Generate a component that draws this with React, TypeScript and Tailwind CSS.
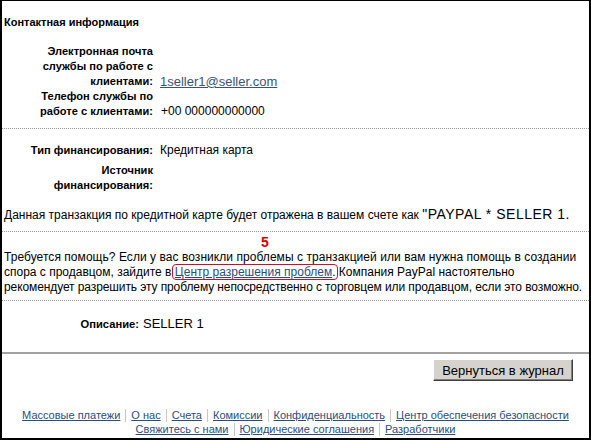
import React from "react"

const footerTop = ["Массовые платежи", "О нас", "Счета", "Комиссии", "Конфиденциальность", "Центр обеспечения безопасности"]
const footerBottom = ["Свяжитесь с нами", "Юридические соглашения", "Разработчики"]

function FooterRow({ items }: { items: string[] }) {
  return (
    <div className="flex justify-center items-center h-[14px]">
      {items.map((item, i) => (
        <React.Fragment key={item}>
          {i > 0 && <span className="mx-[5px] h-[13px] w-px bg-[#c8c8c8]" />}
          <a href="#" className="text-[#2b4d7c] underline">
            {item}
          </a>
        </React.Fragment>
      ))}
    </div>
  )
}

function Dotted() {
  return <div className="border-t border-dotted border-[#9a9a9a]" />
}

export default function App() {
  return (
    <div className="w-[591px] h-[440px] bg-white border-black border-t border-l-2 border-r-2 border-b-2 text-black font-['Liberation_Sans',Arial,sans-serif] text-[12px] leading-[15px] overflow-hidden">
      <div className="px-[2px] pt-[14px] font-bold text-[11px]">Контактная информация</div>

      {/* Contact block */}
      <div className="mt-[14px] font-bold text-[11.1px]">
        <div className="flex items-end">
          <div className="w-[151px] text-right">
            Электронная почта
            <br />
            службы по работе с
            <br />
            клиентами:
          </div>
          <a href="#" className="ml-[7px] font-normal text-[13px] text-[#3b5474] underline">
            1seller1@seller.com
          </a>
        </div>
        <div className="flex items-end">
          <div className="w-[151px] text-right">
            Телефон службы по
            <br />
            работе с клиентами:
          </div>
          <span className="ml-[8px] font-normal text-[12px]">+00 000000000000</span>
        </div>
      </div>

      <div className="mt-[9px]">
        <Dotted />
      </div>

      {/* Funding block */}
      <div className="mt-[14px] font-bold text-[11.1px] flex flex-col gap-[5px]">
        <div className="flex items-start">
          <div className="w-[151px] text-right">Тип финансирования:</div>
          <span className="ml-[7px] font-normal text-[12px]">Кредитная карта</span>
        </div>
        <div className="flex items-start">
          <div className="w-[151px] text-right">
            Источник
            <br />
            финансирования:
          </div>
        </div>
      </div>

      <div className="mt-[14px] px-[2px] whitespace-nowrap">
        Данная транзакция по кредитной карте будет отражена в вашем счете как{" "}
        <span className="text-[14px] tracking-[0.5px]">"PAYPAL * SELLER 1.</span>
      </div>

      <div className="mt-[8px]">
        <Dotted />
      </div>

      {/* Help */}
      <div className="mt-[3px] mb-px pl-[259px] text-[#d40000] font-bold text-[14px] leading-[14px]">5</div>
      <div className="px-[2px] leading-[14px] whitespace-nowrap">
        <div className="tracking-[0.05px]">
          Требуется помощь? Если у вас возникли проблемы с транзакцией или вам нужна помощь в создании
        </div>
        <div>
          спора с продавцом, зайдите в{" "}
          <span className="inline-block border border-[#c8102e] rounded-[4px] px-[2px] -mx-[3px] leading-[14px]">
            <a href="#" className="text-[#2b4d7c] underline">
              Центр разрешения проблем
            </a>
            .
          </span>{" "}
          Компания PayPal настоятельно
        </div>
        <div className="tracking-[-0.1px]">
          рекомендует разрешить эту проблему непосредственно с торговцем или продавцом, если это возможно.
        </div>
      </div>

      <div className="mt-[6px]">
        <Dotted />
      </div>

      {/* Description */}
      <div className="mt-[15px] flex items-baseline">
        <div className="w-[137px] text-right font-bold text-[11.2px]">Описание:</div>
        <span className="ml-[4px] text-[13px]">SELLER 1</span>
      </div>

      <div className="mt-[20px] h-[2px] bg-[#a3a3a3]" />

      <div className="flex justify-end pr-[16px] mt-[5px]">
        <button className="h-[22px] w-[140px] bg-[#d6d3ce] text-[13px] text-black border border-t-white border-l-white border-r-[#404040] border-b-[#404040] shadow-[inset_-1px_-1px_0_#808080]">
          Вернуться в журнал
        </button>
      </div>

      <div className="mt-[27px] text-[11px] leading-[14px]">
        <FooterRow items={footerTop} />
        <FooterRow items={footerBottom} />
      </div>
    </div>
  )
}
